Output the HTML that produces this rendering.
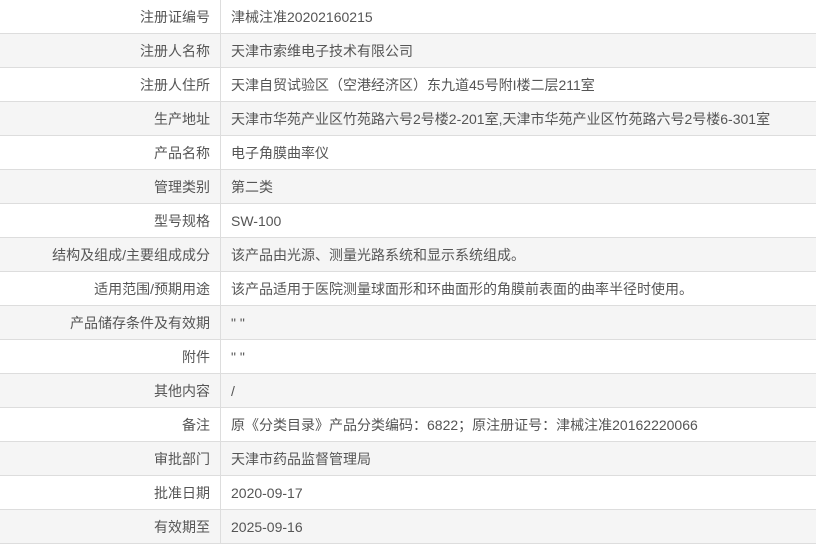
<!DOCTYPE html><html><head><meta charset="utf-8"><style>
body{margin:0;background:#fff;font-family:"Liberation Sans","Noto Sans CJK SC",sans-serif;font-size:14px;color:#555}
table{border-collapse:collapse;width:816px}
td{height:31px;border-bottom:1px solid #ddd;padding:2px 0 0 0;line-height:31px;white-space:nowrap;overflow:hidden}
td.l{width:210px;text-align:right;padding-right:10px;border-right:1px solid #ddd}
td.v{padding-left:10px}
tr:nth-child(even) td{background:#f5f5f5}
</style></head><body><table>
<tr><td class="l">注册证编号</td><td class="v">津械注准20202160215</td></tr>
<tr><td class="l">注册人名称</td><td class="v">天津市索维电子技术有限公司</td></tr>
<tr><td class="l">注册人住所</td><td class="v">天津自贸试验区（空港经济区）东九道45号附I楼二层211室</td></tr>
<tr><td class="l">生产地址</td><td class="v">天津市华苑产业区竹苑路六号2号楼2-201室,天津市华苑产业区竹苑路六号2号楼6-301室</td></tr>
<tr><td class="l">产品名称</td><td class="v">电子角膜曲率仪</td></tr>
<tr><td class="l">管理类别</td><td class="v">第二类</td></tr>
<tr><td class="l">型号规格</td><td class="v">SW-100</td></tr>
<tr><td class="l">结构及组成/主要组成成分</td><td class="v">该产品由光源、测量光路系统和显示系统组成。</td></tr>
<tr><td class="l">适用范围/预期用途</td><td class="v">该产品适用于医院测量球面形和环曲面形的角膜前表面的曲率半径时使用。</td></tr>
<tr><td class="l">产品储存条件及有效期</td><td class="v">" "</td></tr>
<tr><td class="l">附件</td><td class="v">" "</td></tr>
<tr><td class="l">其他内容</td><td class="v">/</td></tr>
<tr><td class="l">备注</td><td class="v">原《分类目录》产品分类编码：6822；原注册证号：津械注准20162220066</td></tr>
<tr><td class="l">审批部门</td><td class="v">天津市药品监督管理局</td></tr>
<tr><td class="l">批准日期</td><td class="v">2020-09-17</td></tr>
<tr><td class="l">有效期至</td><td class="v">2025-09-16</td></tr>
</table></body></html>
